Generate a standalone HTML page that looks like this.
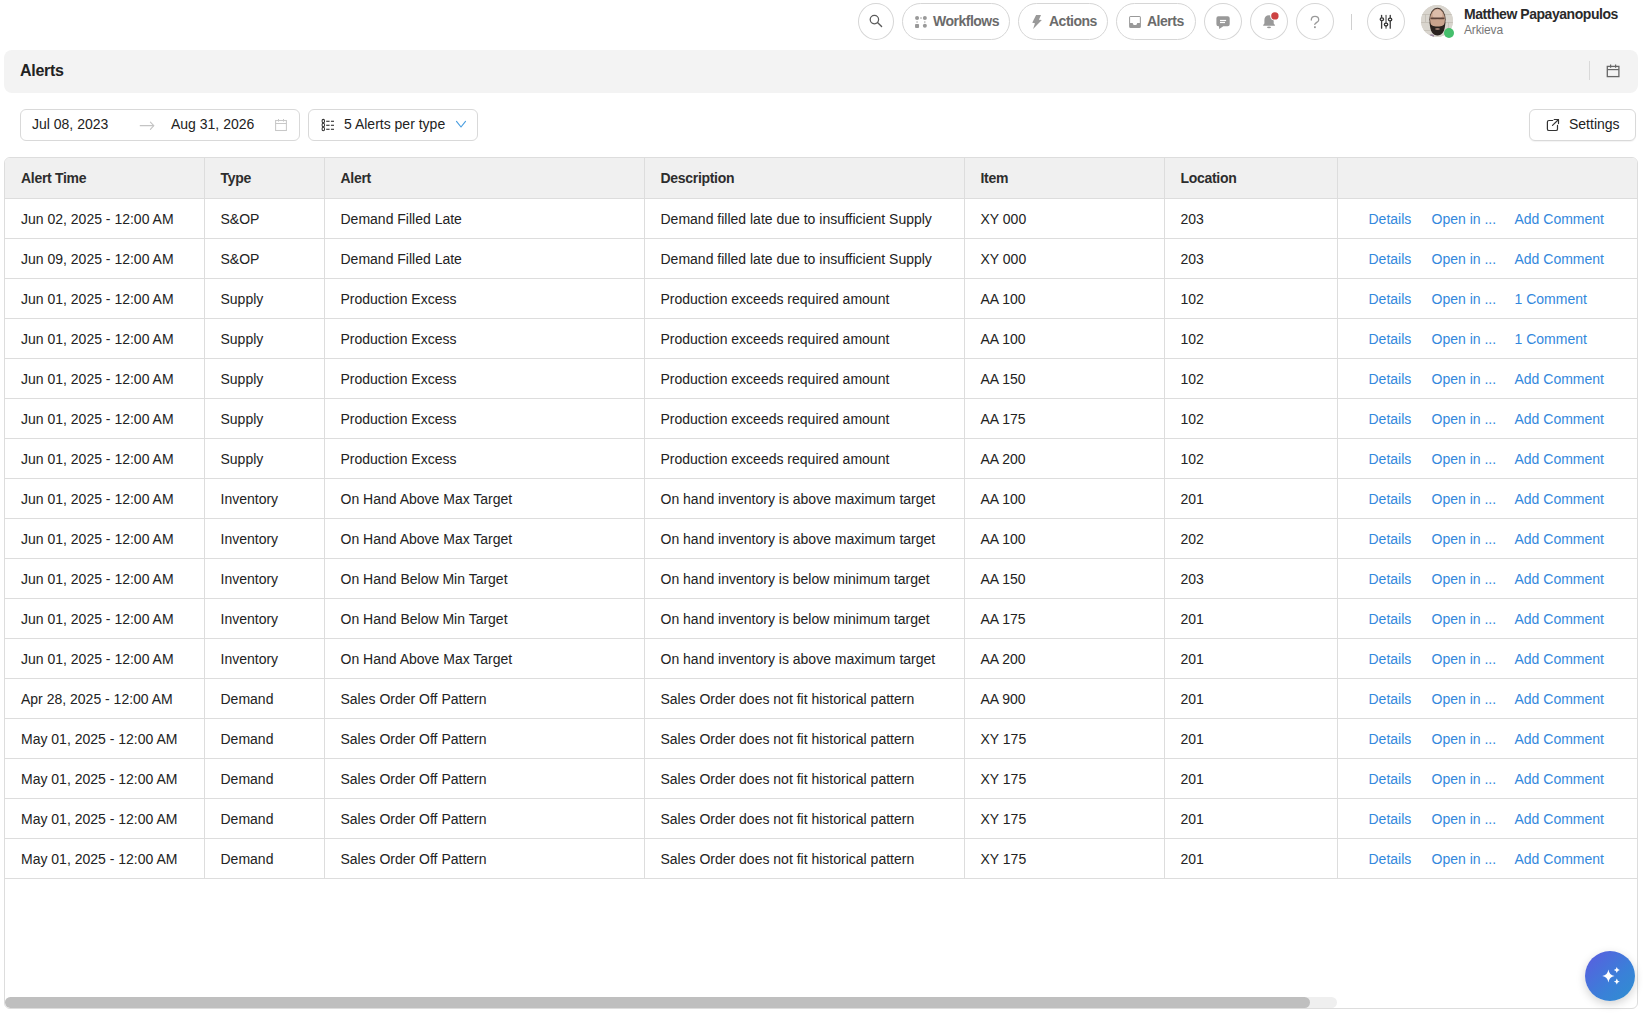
<!DOCTYPE html>
<html><head><meta charset="utf-8">
<style>
*{box-sizing:border-box;margin:0;padding:0}
html,body{width:1643px;height:1020px;overflow:hidden;background:#fff;font-family:"Liberation Sans",sans-serif;color:#222;font-size:14px}
.abs{position:absolute}
.circ{position:absolute;top:3px;width:38px;height:37px;border:1px solid #d6d6d6;border-radius:50%;background:#fff}
.pill{position:absolute;top:3px;height:37px;border:1px solid #d6d6d6;border-radius:19px;background:#fff}
.pill span{position:absolute;top:9px;font-weight:bold;color:#6b6b6b;font-size:14px;line-height:16px;letter-spacing:-0.5px}
.circ svg,.pill svg{position:absolute}
#panel{position:absolute;left:4px;top:50px;width:1634px;height:43px;background:#f3f3f3;border-radius:8px}
#panel .t{position:absolute;left:16px;top:12px;font-size:16px;font-weight:bold;color:#222;line-height:18px;letter-spacing:-0.3px}
.box{position:absolute;border:1px solid #d9d9d9;border-radius:6px;background:#fff}
.box span{position:absolute;top:6px;line-height:16px;color:#222}
#tbl{position:absolute;left:4px;top:157px;width:1634px;height:852px;border:1px solid #ddd;border-radius:6px;overflow:hidden}
table{border-collapse:collapse;table-layout:fixed;width:1632px}
th{background:#f0f0f0;font-weight:bold;text-align:left;height:40px;padding:0 0 0 16px;letter-spacing:-0.3px;border-bottom:1px solid #ddd;border-right:1px solid #ddd;color:#2d2d2d;white-space:nowrap}
td{height:40px;padding:2px 0 0 16px;border-bottom:1px solid #ddd;border-right:1px solid #ddd;white-space:nowrap;color:#222}
th:last-child,td:last-child{border-right:none}
td.act{position:relative;padding:0}
td.act span{position:absolute;top:12px;line-height:16px;color:#3288dd}
.l1{left:31px}.l2{left:94px}.l3{left:177px}
#sbtrack{position:absolute;left:0;top:839px;width:1332px;height:11px;background:#efefef;border-radius:6px}
#sbthumb{position:absolute;left:0;top:839px;width:1305px;height:11px;background:#bfbfbf;border-radius:6px}
#fab{position:absolute;left:1585px;top:951px;width:50px;height:50px;border-radius:50%;background:linear-gradient(135deg,#5c5be0 0%,#3a80d8 60%,#2f8fd0 100%);box-shadow:0 3px 10px rgba(0,0,0,0.18)}
</style></head><body>

<!-- TOP BAR -->
<div class="circ" style="left:858px;width:36px"></div>
<div class="pill" style="left:902px;width:108px"><span style="left:30px">Workflows</span></div>
<div class="pill" style="left:1018px;width:90px"><span style="left:30px">Actions</span></div>
<div class="pill" style="left:1116px;width:80px"><span style="left:30px">Alerts</span></div>
<div class="circ" style="left:1204px"></div>
<div class="circ" style="left:1250px"></div>
<div class="circ" style="left:1296px"></div>
<div class="abs" style="left:1351px;top:14px;width:1px;height:16px;background:#d0d0d0"></div>
<div class="circ" style="left:1367px"></div>
<svg class="abs" style="left:860px;top:5px" width="30" height="30" viewBox="0 0 30 30"><circle cx="14.4" cy="14.6" r="4.2" fill="none" stroke="#5a5a5a" stroke-width="1.25"/><line x1="17.5" y1="17.5" x2="21.6" y2="21.6" stroke="#5a5a5a" stroke-width="1.35" stroke-linecap="round"/></svg>
<svg class="abs" style="left:910px;top:10px" width="20" height="22" viewBox="0 0 20 22"><g fill="#999"><circle cx="7.06" cy="8.03" r="2"/><circle cx="14.85" cy="8.03" r="2"/><rect x="5.05" y="13.9" width="4" height="4" rx="0.9"/><circle cx="14.85" cy="15.85" r="2"/></g><g stroke="#8a8a8a" stroke-width="0.75"><line x1="10" y1="8.03" x2="12" y2="8.03"/><line x1="7.06" y1="11.2" x2="7.06" y2="12.9"/><line x1="14.85" y1="11.2" x2="14.85" y2="12.9"/></g></svg>
<svg class="abs" style="left:1026px;top:10px" width="30" height="22" viewBox="0 0 30 22"><path d="M10.1 5.1 L15 5.1 L12.9 9.7 L15.85 10.1 L7.1 19 L8.95 13.37 L6.25 12.72 Z" fill="#999"/></svg>
<svg class="abs" style="left:1124px;top:10px" width="30" height="22" viewBox="0 0 30 22"><path d="M6.6 5.9 H15.4 Q16.9 5.9 16.9 7.4 V16.4 Q16.9 17.9 15.4 17.9 H6.6 Q5.1 17.9 5.1 16.4 V7.4 Q5.1 5.9 6.6 5.9 Z M6.1 7.1 V12.9 H8.6 L9.6 15.1 H12.3 L13.3 12.9 H15.85 V7.1 Z" fill="#999" fill-rule="evenodd"/></svg>
<svg class="abs" style="left:1208px;top:8px" width="30" height="26" viewBox="0 0 30 26"><path d="M10.4 8.2 H19.7 Q21.7 8.2 21.7 10.2 V16.2 Q21.7 18.2 19.7 18.2 H15.3 L11.2 21 L11 18.2 H10.4 Q8.4 18.2 8.4 16.2 V10.2 Q8.4 8.2 10.4 8.2 Z" fill="#999"/><rect x="12" y="11.9" width="6.1" height="1.2" fill="#fff"/><rect x="12" y="13.9" width="5" height="1.2" fill="#fff"/></svg>
<svg class="abs" style="left:1254px;top:6px" width="30" height="26" viewBox="0 0 30 26"><path d="M15 9.2 C12.2 9.2 10.4 11 10.4 14 V17.6 L9.2 19 V19.8 H20.9 V19 L19.7 17.6 V14 C19.7 11 17.8 9.2 15 9.2 Z" fill="#999"/><ellipse cx="15" cy="21.4" rx="2" ry="0.8" fill="#999"/><circle cx="20.9" cy="9.9" r="4.8" fill="#fff"/><circle cx="20.9" cy="9.9" r="3.7" fill="#cc4242"/></svg>
<svg class="abs" style="left:1300px;top:6px" width="30" height="26" viewBox="0 0 30 26"><path d="M11.3 14.1 C11.3 11.8 13 10.4 15 10.4 C17.1 10.4 18.7 11.8 18.7 13.9 C18.7 16.2 15.4 16.4 14.8 18.4" fill="none" stroke="#999" stroke-width="1.3" stroke-linecap="round"/><rect x="14" y="20.3" width="1.8" height="1.8" fill="#999"/></svg>
<svg class="abs" style="left:1371px;top:6px" width="30" height="26" viewBox="0 0 30 26"><g stroke="#3a3a3a" stroke-width="1.3" stroke-linecap="round"><line x1="10.6" y1="9.4" x2="10.6" y2="22.2"/><line x1="15.04" y1="9.4" x2="15.04" y2="22.2" stroke="#666"/><line x1="19.25" y1="9.4" x2="19.25" y2="22.2"/></g><g fill="#fff" stroke="#333" stroke-width="1.3"><ellipse cx="10.9" cy="13.25" rx="1.7" ry="1.4"/><ellipse cx="15.04" cy="18.6" rx="1.7" ry="1.4"/><ellipse cx="19.1" cy="13.5" rx="1.7" ry="1.4"/></g></svg>
<!-- avatar -->
<div class="abs" style="left:1421px;top:5px;width:32px;height:32px;border-radius:50%;overflow:hidden;background:#d8d4cd">
 <svg width="32" height="32" viewBox="0 0 32 32"><rect width="32" height="32" fill="#d9d5ce"/><g fill="#c2bdb5"><rect x="0" y="9" width="32" height="0.8"/><rect x="0" y="17" width="32" height="0.8"/><rect x="0" y="25" width="32" height="0.8"/><rect x="4" y="9" width="0.8" height="8"/><rect x="27" y="17" width="0.8" height="8"/></g><ellipse cx="16.5" cy="14.5" rx="8.2" ry="11.8" fill="#4a3a33"/><ellipse cx="16.5" cy="14.8" rx="7.4" ry="11" fill="#c9a38d"/><ellipse cx="16.5" cy="9.5" rx="5" ry="5" fill="#dcbcaa"/><rect x="9.5" y="12.6" width="14" height="1.6" rx="0.8" fill="#5b4138"/><path d="M8.6 17 C9 27 12 30.5 16.5 30.5 C21 30.5 24 27 24.4 17 C23 20.5 21.5 21.5 16.5 21.5 C11.5 21.5 10 20.5 8.6 17Z" fill="#2a221f"/><ellipse cx="16.5" cy="24" rx="2.4" ry="0.9" fill="#9a7a6e"/><path d="M6 32 C8 29 11 28.5 13 30 L13 32Z" fill="#9a86a0"/></svg>
</div>
<div class="abs" style="left:1444px;top:28px;width:10px;height:10px;border-radius:50%;background:#45bf6c"></div>
<div class="abs" style="left:1464px;top:6px;font-size:14px;font-weight:bold;color:#2a2a2a;line-height:16px;white-space:nowrap;letter-spacing:-0.45px">Matthew Papayanopulos</div>
<div class="abs" style="left:1464px;top:23px;font-size:12px;color:#777;line-height:14px;letter-spacing:-0.15px">Arkieva</div>

<!-- PANEL -->
<div id="panel"><div class="t">Alerts</div>
 <div class="abs" style="left:1585px;top:11px;width:1px;height:19px;background:#d9d9d9"></div>
 <svg class="abs" style="left:1602px;top:13px" width="14" height="16" viewBox="0 0 14 16"><rect x="1.3" y="3.4" width="11.6" height="10.2" fill="none" stroke="#666" stroke-width="1.3"/><line x1="1.3" y1="6.6" x2="12.9" y2="6.6" stroke="#666" stroke-width="1.2"/><line x1="4.6" y1="1.6" x2="4.6" y2="4.8" stroke="#666" stroke-width="1.2"/><line x1="9.6" y1="1.6" x2="9.6" y2="4.8" stroke="#666" stroke-width="1.2"/></svg>
</div>

<!-- FILTER ROW -->
<div class="box" style="left:20px;top:109px;width:280px;height:32px">
 <span style="left:11px">Jul 08, 2023</span>
 <span style="left:150px">Aug 31, 2026</span>
</div>
<svg class="abs" style="left:134px;top:114px" width="26" height="22" viewBox="0 0 26 22"><g fill="none" stroke="#c4c4c4" stroke-width="1.1" stroke-linecap="round" stroke-linejoin="round"><line x1="6.25" y1="11.65" x2="19.6" y2="11.65"/><path d="M16.4 8.2 L19.8 11.65 L16.4 15.3"/></g></svg>
<svg class="abs" style="left:270px;top:114px" width="22" height="22" viewBox="0 0 22 22"><g fill="none" stroke="#c8c8c8" stroke-width="1.05"><rect x="5.6" y="6.5" width="10.8" height="10"/><line x1="5.6" y1="9.5" x2="16.4" y2="9.5"/><line x1="8.5" y1="5" x2="8.5" y2="7.6"/><line x1="13.5" y1="5" x2="13.5" y2="7.6"/></g></svg>
<div class="box" style="left:308px;top:109px;width:170px;height:32px">
 <span style="left:35px">5 Alerts per type</span>
</div>
<svg class="abs" style="left:316px;top:114px" width="24" height="22" viewBox="0 0 24 22"><g fill="none" stroke="#333" stroke-width="1.05"><ellipse cx="7.3" cy="7.1" rx="1.25" ry="1.75"/><ellipse cx="7.3" cy="11" rx="1.25" ry="1.75"/><ellipse cx="7.3" cy="14.9" rx="1.25" ry="1.75"/></g><g stroke="#3a3a3a" stroke-width="1.15"><line x1="10.2" y1="7.3" x2="13.6" y2="7.3"/><line x1="14.9" y1="7.3" x2="18" y2="7.3"/><line x1="10.2" y1="11.3" x2="13.6" y2="11.3"/><line x1="14.9" y1="11.3" x2="18" y2="11.3"/><line x1="10.2" y1="15.3" x2="13.6" y2="15.3"/><line x1="14.9" y1="15.3" x2="18" y2="15.3"/></g></svg>
<svg class="abs" style="left:450px;top:114px" width="22" height="22" viewBox="0 0 22 22"><path d="M6.5 7.4 L11 13 L15.5 7.4" fill="none" stroke="#4a9ee0" stroke-width="1.15" stroke-linecap="round" stroke-linejoin="round"/></svg>
<div class="box" style="left:1529px;top:109px;width:107px;height:32px;box-shadow:0 1px 1px rgba(0,0,0,0.05)">
 <span style="left:39px">Settings</span>
</div>
<svg class="abs" style="left:1540px;top:112px" width="24" height="24" viewBox="0 0 24 24"><g fill="none" stroke="#333" stroke-width="1.2" stroke-linecap="round" stroke-linejoin="round"><path d="M12.7 8.5 H9 Q7.4 8.5 7.4 10.1 V16.9 Q7.4 18.5 9 18.5 H15.9 Q17.5 18.5 17.5 16.9 V13.4"/><line x1="12.5" y1="13.4" x2="18.3" y2="7.7"/><path d="M14.2 7.5 H18.5 V11.6"/></g></svg>

<!-- TABLE -->
<div id="tbl">
<table>
<colgroup><col style="width:199px"><col style="width:120px"><col style="width:320px"><col style="width:320px"><col style="width:200px"><col style="width:173px"><col></colgroup>
<thead><tr><th>Alert Time</th><th>Type</th><th>Alert</th><th>Description</th><th>Item</th><th>Location</th><th></th></tr></thead>
<tbody>
<tr><td>Jun 02, 2025 - 12:00 AM</td><td>S&amp;OP</td><td>Demand Filled Late</td><td>Demand filled late due to insufficient Supply</td><td>XY 000</td><td>203</td><td class="act"><span class="l1">Details</span><span class="l2">Open in ...</span><span class="l3">Add Comment</span></td></tr>
<tr><td>Jun 09, 2025 - 12:00 AM</td><td>S&amp;OP</td><td>Demand Filled Late</td><td>Demand filled late due to insufficient Supply</td><td>XY 000</td><td>203</td><td class="act"><span class="l1">Details</span><span class="l2">Open in ...</span><span class="l3">Add Comment</span></td></tr>
<tr><td>Jun 01, 2025 - 12:00 AM</td><td>Supply</td><td>Production Excess</td><td>Production exceeds required amount</td><td>AA 100</td><td>102</td><td class="act"><span class="l1">Details</span><span class="l2">Open in ...</span><span class="l3">1 Comment</span></td></tr>
<tr><td>Jun 01, 2025 - 12:00 AM</td><td>Supply</td><td>Production Excess</td><td>Production exceeds required amount</td><td>AA 100</td><td>102</td><td class="act"><span class="l1">Details</span><span class="l2">Open in ...</span><span class="l3">1 Comment</span></td></tr>
<tr><td>Jun 01, 2025 - 12:00 AM</td><td>Supply</td><td>Production Excess</td><td>Production exceeds required amount</td><td>AA 150</td><td>102</td><td class="act"><span class="l1">Details</span><span class="l2">Open in ...</span><span class="l3">Add Comment</span></td></tr>
<tr><td>Jun 01, 2025 - 12:00 AM</td><td>Supply</td><td>Production Excess</td><td>Production exceeds required amount</td><td>AA 175</td><td>102</td><td class="act"><span class="l1">Details</span><span class="l2">Open in ...</span><span class="l3">Add Comment</span></td></tr>
<tr><td>Jun 01, 2025 - 12:00 AM</td><td>Supply</td><td>Production Excess</td><td>Production exceeds required amount</td><td>AA 200</td><td>102</td><td class="act"><span class="l1">Details</span><span class="l2">Open in ...</span><span class="l3">Add Comment</span></td></tr>
<tr><td>Jun 01, 2025 - 12:00 AM</td><td>Inventory</td><td>On Hand Above Max Target</td><td>On hand inventory is above maximum target</td><td>AA 100</td><td>201</td><td class="act"><span class="l1">Details</span><span class="l2">Open in ...</span><span class="l3">Add Comment</span></td></tr>
<tr><td>Jun 01, 2025 - 12:00 AM</td><td>Inventory</td><td>On Hand Above Max Target</td><td>On hand inventory is above maximum target</td><td>AA 100</td><td>202</td><td class="act"><span class="l1">Details</span><span class="l2">Open in ...</span><span class="l3">Add Comment</span></td></tr>
<tr><td>Jun 01, 2025 - 12:00 AM</td><td>Inventory</td><td>On Hand Below Min Target</td><td>On hand inventory is below minimum target</td><td>AA 150</td><td>203</td><td class="act"><span class="l1">Details</span><span class="l2">Open in ...</span><span class="l3">Add Comment</span></td></tr>
<tr><td>Jun 01, 2025 - 12:00 AM</td><td>Inventory</td><td>On Hand Below Min Target</td><td>On hand inventory is below minimum target</td><td>AA 175</td><td>201</td><td class="act"><span class="l1">Details</span><span class="l2">Open in ...</span><span class="l3">Add Comment</span></td></tr>
<tr><td>Jun 01, 2025 - 12:00 AM</td><td>Inventory</td><td>On Hand Above Max Target</td><td>On hand inventory is above maximum target</td><td>AA 200</td><td>201</td><td class="act"><span class="l1">Details</span><span class="l2">Open in ...</span><span class="l3">Add Comment</span></td></tr>
<tr><td>Apr 28, 2025 - 12:00 AM</td><td>Demand</td><td>Sales Order Off Pattern</td><td>Sales Order does not fit historical pattern</td><td>AA 900</td><td>201</td><td class="act"><span class="l1">Details</span><span class="l2">Open in ...</span><span class="l3">Add Comment</span></td></tr>
<tr><td>May 01, 2025 - 12:00 AM</td><td>Demand</td><td>Sales Order Off Pattern</td><td>Sales Order does not fit historical pattern</td><td>XY 175</td><td>201</td><td class="act"><span class="l1">Details</span><span class="l2">Open in ...</span><span class="l3">Add Comment</span></td></tr>
<tr><td>May 01, 2025 - 12:00 AM</td><td>Demand</td><td>Sales Order Off Pattern</td><td>Sales Order does not fit historical pattern</td><td>XY 175</td><td>201</td><td class="act"><span class="l1">Details</span><span class="l2">Open in ...</span><span class="l3">Add Comment</span></td></tr>
<tr><td>May 01, 2025 - 12:00 AM</td><td>Demand</td><td>Sales Order Off Pattern</td><td>Sales Order does not fit historical pattern</td><td>XY 175</td><td>201</td><td class="act"><span class="l1">Details</span><span class="l2">Open in ...</span><span class="l3">Add Comment</span></td></tr>
<tr><td>May 01, 2025 - 12:00 AM</td><td>Demand</td><td>Sales Order Off Pattern</td><td>Sales Order does not fit historical pattern</td><td>XY 175</td><td>201</td><td class="act"><span class="l1">Details</span><span class="l2">Open in ...</span><span class="l3">Add Comment</span></td></tr>
</tbody></table>
<div id="sbtrack"></div><div id="sbthumb"></div>
</div>
<div id="fab">
 <svg class="abs" style="left:0;top:0" width="50" height="50" viewBox="0 0 50 50"><path d="M23.4 18.6 Q24.2 24.2 29.6 25 Q24.2 25.8 23.4 31.4 Q22.6 25.8 17.2 25 Q22.6 24.2 23.4 18.6Z" fill="#fff"/><path d="M31.8 16 Q32.2 18.6 34.8 19 Q32.2 19.4 31.8 22 Q31.4 19.4 28.8 19 Q31.4 18.6 31.8 16Z" fill="#fff"/><path d="M31.8 27.4 Q32.2 30 34.8 30.4 Q32.2 30.8 31.8 33.4 Q31.4 30.8 28.8 30.4 Q31.4 30 31.8 27.4Z" fill="#fff"/></svg>
</div>
</body></html>
